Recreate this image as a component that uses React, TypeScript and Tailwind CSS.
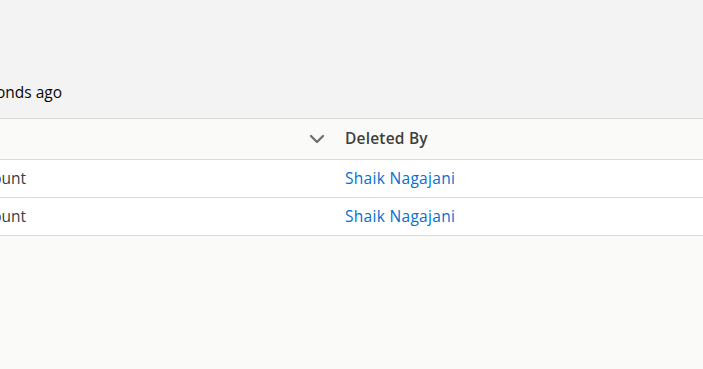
import { ChevronDown } from 'lucide-react';

const rows = [
  { type: 'Account', deletedBy: 'Shaik Nagajani' },
  { type: 'Account', deletedBy: 'Shaik Nagajani' },
];

export default function App() {
  return (
    <main
      className="min-h-[369px] w-[703px] overflow-hidden bg-[#fafaf9] text-[15.5px] text-[#080707]"
      style={{ fontFamily: '"Open Sans", "Liberation Sans", sans-serif' }}
    >
      {/* list view header */}
      <div className="flex h-[118px] items-end bg-[#f3f3f3] pb-[16px]">
        <div className="flex w-[62px] justify-end overflow-hidden whitespace-nowrap leading-[20px]">
          <span>2 items • Updated a few seconds ago</span>
        </div>
      </div>

      <div className="border-t border-[#dddbda]">
        {/* column headers */}
        <div className="flex h-[41px] items-center border-b border-[#dddbda] bg-[#fafaf9]">
          <div className="flex w-[345px] justify-end pr-[16px]">
            <ChevronDown className="h-[24px] w-[24px] text-[#706e6b]" strokeWidth={2.3} />
          </div>
          <div className="font-semibold tracking-[0.2px] text-[#3e3e3c]">Deleted By</div>
        </div>

        {rows.map((row, i) => (
          <div key={i} className="flex h-[38px] items-center border-b border-[#dddbda] bg-white">
            <div className="flex w-[27px] justify-end overflow-hidden whitespace-nowrap text-[#3e3e3c]">
              <span className="mr-[1px]">{row.type}</span>
            </div>
            <a className="ml-[318px] tracking-[0.3px] text-[#0070d2]" href="#">
              {row.deletedBy}
            </a>
          </div>
        ))}
      </div>
    </main>
  );
}
